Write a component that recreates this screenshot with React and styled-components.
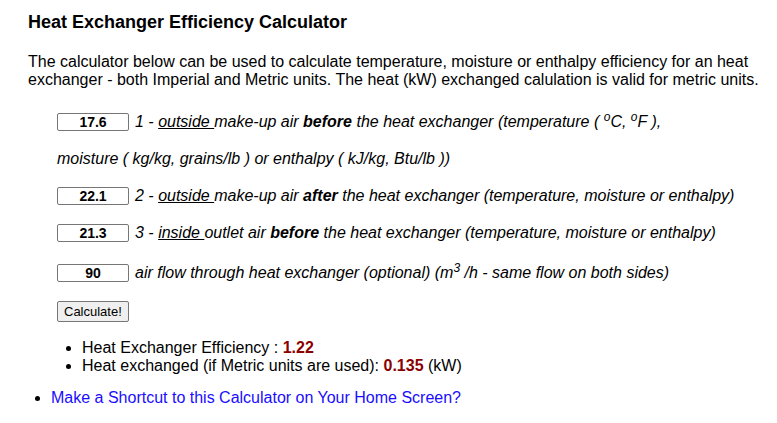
import React from 'react'
import styled, { createGlobalStyle } from 'styled-components'

const GlobalStyle = createGlobalStyle`
  body {
    margin: 0;
    background: #fff;
    color: #000;
    font-family: "Liberation Sans", Arial, sans-serif;
  }
`

const Page = styled.div`
  width: 735px;
  padding: 11px 0 0 28px;
`

const Heading = styled.h1`
  font-size: 18px;
  line-height: 22px;
  font-weight: bold;
  margin: 0 0 20px 0;
`

const Intro = styled.p`
  font-size: 16px;
  line-height: 18px;
  margin: 0 0 14px 0;
`

const Form = styled.form`
  margin: 0 0 0 29px;
`

const Row = styled.div`
  font-size: 16px;
  font-style: italic;
  line-height: 37px;
  margin-top: ${(p) => p.$gap || 0}px;
`

const Field = styled.input`
  box-sizing: border-box;
  width: 72px;
  height: 18px;
  margin: 0 6px 0 0;
  padding: 0 2px;
  border: 1px solid #767676;
  border-radius: 2px;
  font-family: "Liberation Sans", Arial, sans-serif;
  font-size: 14px;
  font-weight: bold;
  font-style: normal;
  text-align: center;
  vertical-align: middle;
  position: relative;
  top: -1px;
`

const Under = styled.span`
  text-decoration: underline;
`

const Sup = styled.sup`
  font-size: 12px;
  line-height: 0;
`

const Button = styled.button`
  display: block;
  margin: 10px 0 0 0;
  height: 21px;
  padding: 0 6px;
  font-family: "Liberation Sans", Arial, sans-serif;
  font-size: 13px;
  color: #000;
  background: #efefef;
  border: 1px solid #767676;
  border-radius: 2px;
`

const Results = styled.ul`
  margin: 17px 0 0 0;
  padding-left: 25px;
  font-size: 16px;
  line-height: 18px;
`

const Value = styled.b`
  color: #8b0000;
`

const Links = styled.ul`
  margin: 14px 0 0 0;
  padding-left: 23px;
  font-size: 16px;
  line-height: 18px;
`

const Link = styled.a`
  color: #1a0dff;
  text-decoration: none;
`

export default function App() {
  return (
    <Page>
      <GlobalStyle />
      <Heading>Heat Exchanger Efficiency Calculator</Heading>
      <Intro>
        The calculator below can be used to calculate temperature, moisture or enthalpy efficiency for an heat
        exchanger - both Imperial and Metric units. The heat (kW) exchanged calulation is valid for metric units.
      </Intro>
      <Form onSubmit={(e) => e.preventDefault()}>
        <Row>
          <Field defaultValue="17.6" />1 - <Under>outside </Under>make-up air <b>before</b> the heat exchanger
          (temperature ( <Sup>o</Sup>C, <Sup>o</Sup>F ),
        </Row>
        <Row>moisture ( kg/kg, grains/lb ) or enthalpy ( kJ/kg, Btu/lb ))</Row>
        <Row>
          <Field defaultValue="22.1" />2 - <Under>outside </Under>make-up air <b>after</b> the heat exchanger
          (temperature, moisture or enthalpy)
        </Row>
        <Row>
          <Field defaultValue="21.3" />3 - <Under>inside </Under>outlet air <b>before</b> the heat exchanger
          (temperature, moisture or enthalpy)
        </Row>
        <Row $gap={3}>
          <Field defaultValue="90" />air flow through heat exchanger (optional) (m<Sup>3</Sup> /h - same flow on
          both sides)
        </Row>
        <Button type="button">Calculate!</Button>
        <Results>
          <li>
            Heat Exchanger Efficiency : <Value>1.22</Value>
          </li>
          <li>
            Heat exchanged (if Metric units are used): <Value>0.135</Value> (kW)
          </li>
        </Results>
      </Form>
      <Links>
        <li>
          <Link href="#">Make a Shortcut to this Calculator on Your Home Screen?</Link>
        </li>
      </Links>
    </Page>
  )
}
